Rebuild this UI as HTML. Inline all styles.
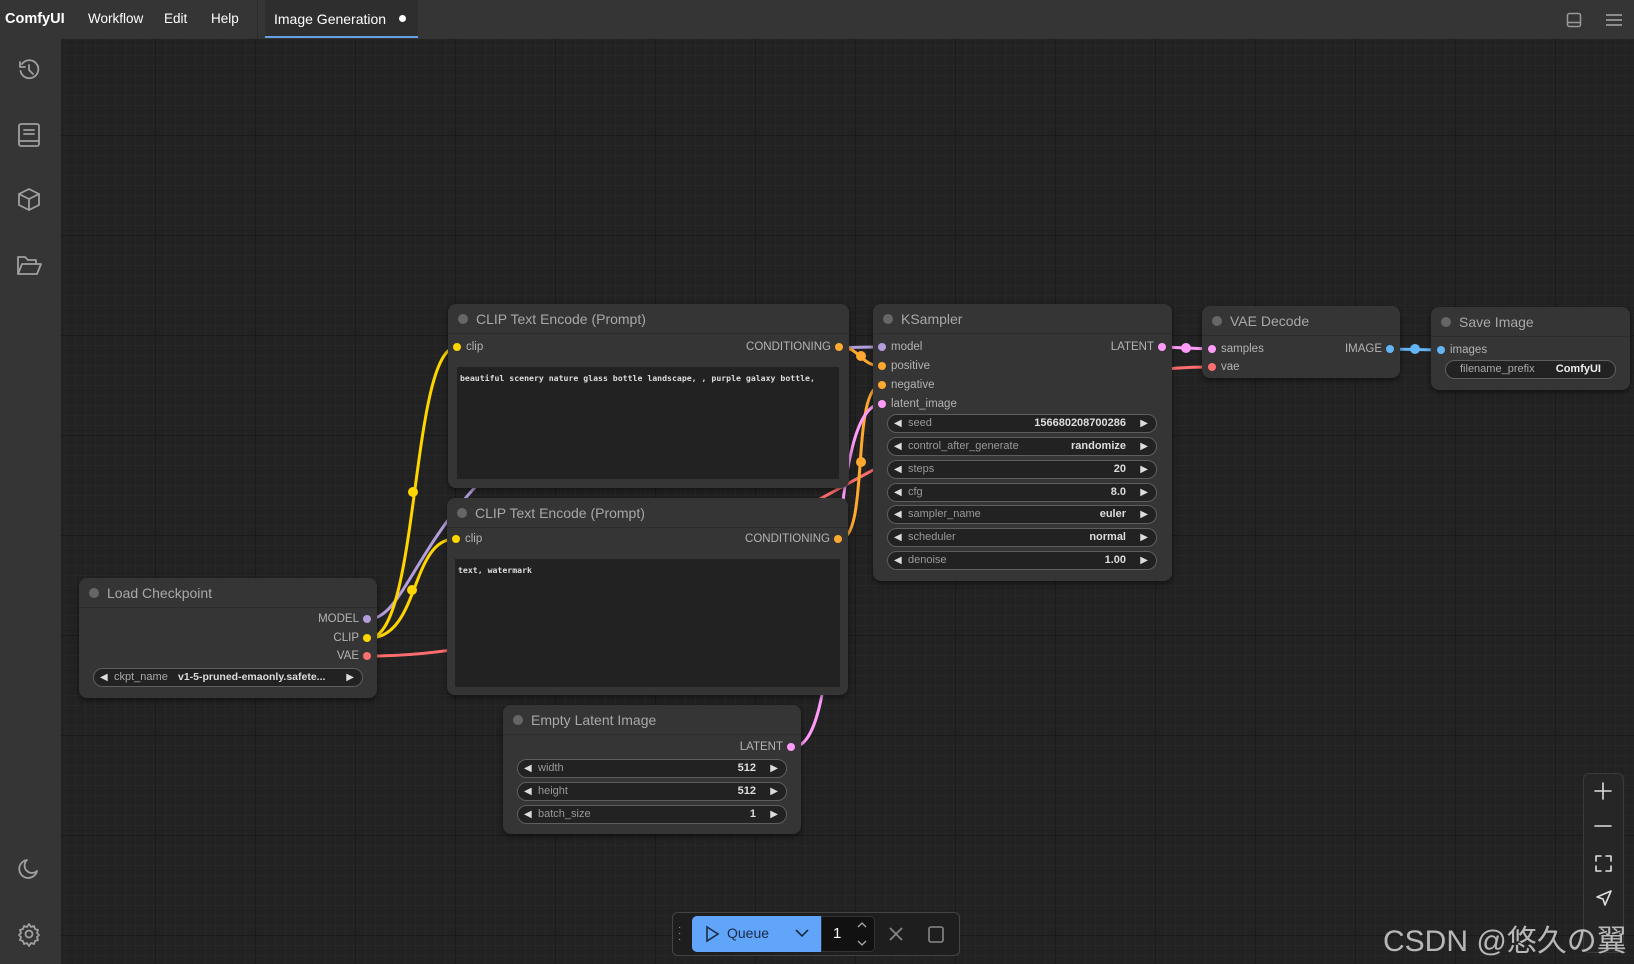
<!DOCTYPE html>
<html><head><meta charset="utf-8"><style>
*{box-sizing:border-box;margin:0;padding:0}
body{width:1634px;height:964px;overflow:hidden;background:#222;font-family:"Liberation Sans",Arial,sans-serif;position:relative}
#canvas{position:absolute;left:61px;top:39px;right:0;bottom:0;background-color:#222;
background-image:linear-gradient(#1a1a1a 1px,transparent 1px),linear-gradient(90deg,#1a1a1a 1px,transparent 1px),linear-gradient(#272727 1px,transparent 1px),linear-gradient(90deg,#272727 1px,transparent 1px);
background-size:100px 100px,100px 100px,10px 10px,10px 10px;background-position:-6px -4px}
#top{position:absolute;left:0;top:0;width:1634px;height:39px;background:#353535}
#top span{position:absolute;top:11px;color:#fff;font-size:13.5px}
#side{position:absolute;left:0;top:39px;width:61px;bottom:0;background:#353535}
.node{position:absolute;background:#353535;border-radius:8px;box-shadow:0 2px 6px rgba(0,0,0,.5)}
.title{height:30px;border-bottom:1px solid #2c2c2c;color:#a8a8a8;font-size:14px;line-height:30px;padding-left:28px;position:relative}
.title:before{content:"";position:absolute;left:10px;top:10px;width:10px;height:10px;border-radius:50%;background:#666}
.slot{position:absolute;font-size:11.5px;color:#b3b3b3}
.dot{position:absolute;width:8px;height:8px;border-radius:50%}
.w{position:absolute;height:19px;background:#222;border:1px solid #5e5e5e;border-radius:10px;font-size:11px;color:#999;line-height:17px}
.w .l{position:absolute;left:20px}
.w .v{position:absolute;right:30px;color:#ddd;font-weight:bold}
.w:before{content:"◀";position:absolute;left:6px;color:#ddd;font-size:10px}
.w:after{content:"▶";position:absolute;right:8px;color:#ddd;font-size:10px}
.w.t:before,.w.t:after{content:none}
.ta{position:absolute;background:#222;color:#ddd;font-family:"DejaVu Sans Mono",monospace;font-size:8.2px;font-weight:bold;padding:6px 3px;white-space:nowrap;overflow:hidden}
</style></head><body>
<div id="canvas"></div>
<svg width="1634" height="964" style="position:absolute;left:0;top:0" fill="none" stroke-width="3">
<path d="M369 619 C430 619 430 347 882 347" stroke="#b39ddb"/>
<path d="M369 638 C420 638 410 347 457 347" stroke="#ffd500"/>
<path d="M369 638 C420 638 410 539 455 539" stroke="#ffd500"/>
<path d="M369 656 C700 656 900 367 1210 367" stroke="#ff6e6e"/>
<path d="M840 347 C860 347 860 366 882 366" stroke="#ffa931"/>
<path d="M840 539 C870 539 850 385 882 385" stroke="#ffa931"/>
<path d="M793 747 C850 747 820 404 882 404" stroke="#ff9cf9"/>
<path d="M1163 347 L1210 349" stroke="#ff9cf9"/>
<path d="M1391 349 L1440 350" stroke="#64b5f6"/>
<g stroke="none">
<circle cx="413" cy="492" r="5" fill="#ffd500"/><circle cx="412" cy="590" r="5" fill="#ffd500"/>
<circle cx="861" cy="356" r="5" fill="#ffa931"/><circle cx="861" cy="462" r="5" fill="#ffa931"/>
<circle cx="1186" cy="348" r="5" fill="#ff9cf9"/><circle cx="1415" cy="349" r="5" fill="#64b5f6"/>
</g></svg>

<div id="top">
<span style="left:5px;font-weight:bold;font-size:14.5px">ComfyUI</span>
<span style="left:88px">Workflow</span><span style="left:164px">Edit</span><span style="left:211px">Help</span>
<div style="position:absolute;left:257px;top:0;width:1px;height:39px;background:#2a2a2a"></div>
<div style="position:absolute;left:265px;top:0;width:153px;height:38px;background:#2e2e2e;border-bottom:2px solid #64a0e8"></div>
<span style="left:274px;font-size:14px">Image Generation</span>
<div style="position:absolute;left:399px;top:15px;width:7px;height:7px;border-radius:50%;background:#fff"></div>
<svg style="position:absolute;left:1566px;top:12px" width="16" height="16" fill="none" stroke="#999" stroke-width="1.5"><rect x="1.5" y="1.5" width="13" height="13" rx="2"/><path d="M1.5 10.5h13"/></svg>
<svg style="position:absolute;left:1605px;top:12px" width="18" height="16" stroke="#999" stroke-width="1.8"><path d="M1 3h16M1 8h16M1 13h16"/></svg>
</div>

<div id="side">
<svg width="61" height="920" fill="none" stroke="#a0a0a0" stroke-width="1.8" stroke-linecap="round" stroke-linejoin="round">
<g transform="translate(17,19)"><path d="M3 4v5h5"/><path d="M3.5 13A9 9 0 1 0 5 6"/><path d="M12 7v5l4 4"/></g>
<g transform="translate(18,84)"><rect x="1" y="1" width="20" height="22" rx="2"/><path d="M1 18h20M6 7h10M6 11h10"/></g>
<g transform="translate(17,148)"><path d="M12 2l10 5v11l-10 5-10-5V7z"/><path d="M2 7l10 5 10-5M12 12v11"/></g>
<g transform="translate(17,215)"><path d="M1 20V3h7l3 3h8v4"/><path d="M1 20l4-10h19l-4 10z"/></g>
<g transform="translate(17,818)"><path d="M20 14A9 9 0 1 1 10 3a7 7 0 0 0 10 11z"/></g>
<g transform="translate(17,883)"><circle cx="12" cy="12" r="3.5"/><path d="M12 2l2 3 3-1 1 3 3 1-1 3 2 2-2 2 1 3-3 1-1 3-3-1-2 3-2-3-3 1-1-3-3-1 1-3-2-2 2-2-1-3 3-1 1-3 3 1z"/></g>
</svg></div>

<!-- CLIP 1 -->
<div class="node" style="left:448px;top:304px;width:401px;height:184px">
<div class="title">CLIP Text Encode (Prompt)</div>
<div class="dot" style="left:5px;top:39px;background:#ffd500"></div><div class="slot" style="left:18px;top:37px">clip</div>
<div class="slot" style="right:18px;top:37px">CONDITIONING</div><div class="dot" style="right:6px;top:39px;background:#ffa931"></div>
<div class="ta" style="left:9px;top:63px;width:382px;height:112px">beautiful scenery nature glass bottle landscape, , purple galaxy bottle,</div>
</div>
<!-- CLIP 2 -->
<div class="node" style="left:447px;top:498px;width:401px;height:197px">
<div class="title">CLIP Text Encode (Prompt)</div>
<div class="dot" style="left:5px;top:37px;background:#ffd500"></div><div class="slot" style="left:18px;top:35px">clip</div>
<div class="slot" style="right:18px;top:35px">CONDITIONING</div><div class="dot" style="right:6px;top:37px;background:#ffa931"></div>
<div class="ta" style="left:8px;top:61px;width:385px;height:128px">text, watermark</div>
</div>
<!-- Load Checkpoint -->
<div class="node" style="left:79px;top:578px;width:298px;height:120px">
<div class="title">Load Checkpoint</div>
<div class="slot" style="right:18px;top:35px">MODEL</div><div class="dot" style="right:6px;top:37px;background:#b39ddb"></div>
<div class="slot" style="right:18px;top:54px">CLIP</div><div class="dot" style="right:6px;top:56px;background:#ffd500"></div>
<div class="slot" style="right:18px;top:72px">VAE</div><div class="dot" style="right:6px;top:74px;background:#ff6e6e"></div>
<div class="w" style="left:14px;top:90px;width:270px"><span class="l" style="color:#aaa">ckpt_name</span><span class="v" style="left:84px;right:auto;font-size:10.5px">v1-5-pruned-emaonly.safete...</span></div>
</div>
<!-- Empty Latent -->
<div class="node" style="left:503px;top:705px;width:298px;height:129px">
<div class="title">Empty Latent Image</div>
<div class="slot" style="right:18px;top:36px">LATENT</div><div class="dot" style="right:6px;top:38px;background:#ff9cf9"></div>
<div class="w" style="left:14px;top:54px;width:270px"><span class="l">width</span><span class="v">512</span></div>
<div class="w" style="left:14px;top:77px;width:270px"><span class="l">height</span><span class="v">512</span></div>
<div class="w" style="left:14px;top:100px;width:270px"><span class="l">batch_size</span><span class="v">1</span></div>
</div>
<!-- KSampler -->
<div class="node" style="left:873px;top:304px;width:299px;height:277px">
<div class="title">KSampler</div>
<div class="dot" style="left:5px;top:39px;background:#b39ddb"></div><div class="slot" style="left:18px;top:37px">model</div>
<div class="dot" style="left:5px;top:58px;background:#ffa931"></div><div class="slot" style="left:18px;top:56px">positive</div>
<div class="dot" style="left:5px;top:77px;background:#ffa931"></div><div class="slot" style="left:18px;top:75px">negative</div>
<div class="dot" style="left:5px;top:96px;background:#ff9cf9"></div><div class="slot" style="left:18px;top:94px">latent_image</div>
<div class="slot" style="right:18px;top:37px">LATENT</div><div class="dot" style="right:6px;top:39px;background:#ff9cf9"></div>
<div class="w" style="left:14px;top:110px;width:270px"><span class="l">seed</span><span class="v">156680208700286</span></div>
<div class="w" style="left:14px;top:133px;width:270px"><span class="l">control_after_generate</span><span class="v">randomize</span></div>
<div class="w" style="left:14px;top:156px;width:270px"><span class="l">steps</span><span class="v">20</span></div>
<div class="w" style="left:14px;top:179px;width:270px"><span class="l">cfg</span><span class="v">8.0</span></div>
<div class="w" style="left:14px;top:201px;width:270px"><span class="l">sampler_name</span><span class="v">euler</span></div>
<div class="w" style="left:14px;top:224px;width:270px"><span class="l">scheduler</span><span class="v">normal</span></div>
<div class="w" style="left:14px;top:247px;width:270px"><span class="l">denoise</span><span class="v">1.00</span></div>
</div>
<!-- VAE Decode -->
<div class="node" style="left:1202px;top:306px;width:198px;height:72px">
<div class="title">VAE Decode</div>
<div class="dot" style="left:6px;top:39px;background:#ff9cf9"></div><div class="slot" style="left:19px;top:37px">samples</div>
<div class="dot" style="left:6px;top:57px;background:#ff6e6e"></div><div class="slot" style="left:19px;top:55px">vae</div>
<div class="slot" style="right:18px;top:37px">IMAGE</div><div class="dot" style="right:6px;top:39px;background:#64b5f6"></div>
</div>
<!-- Save Image -->
<div class="node" style="left:1431px;top:307px;width:199px;height:83px">
<div class="title">Save Image</div>
<div class="dot" style="left:6px;top:39px;background:#64b5f6"></div><div class="slot" style="left:19px;top:37px">images</div>
<div class="w t" style="left:14px;top:53px;width:171px;line-height:17px"><span style="position:absolute;left:14px;color:#aaa">filename_prefix</span><span style="position:absolute;right:14px;color:#eee;font-weight:bold">ComfyUI</span></div>
</div>

<!-- zoom controls -->
<div style="position:absolute;left:1583px;top:773px;width:41px;height:180px;background:#262626;border:1px solid #3a3a3a;border-radius:6px"></div>
<svg style="position:absolute;left:1583px;top:773px" width="41" height="180" fill="none" stroke="#ddd" stroke-width="1.6" stroke-linecap="round" stroke-linejoin="round">
<path d="M20 10v16M12 18h16M12 53h16"/>
<path d="M13 88v-5h5M23 83h5v5M28 93v5h-5M18 98h-5v-5"/>
<path d="M28 118l-14 6 6 2 2 6z"/>
</svg>
<!-- queue -->
<div style="position:absolute;left:672px;top:912px;width:288px;height:44px;background:#1e1e1e;border:1px solid #444;border-radius:6px"></div>
<div style="position:absolute;left:678px;top:925px;color:#c8a060;font-size:10px;line-height:6px">·<br>·<br>·</div>
<div style="position:absolute;left:692px;top:916px;width:129px;height:36px;background:#60a5fa;border-radius:5px 0 0 5px"></div>
<svg style="position:absolute;left:705px;top:925px" width="110" height="18" fill="none" stroke="#1c2b44" stroke-width="1.6"><path d="M2 2l11 7-11 7z"/><path d="M91 5l6 6 6-6"/></svg>
<span style="position:absolute;left:727px;top:925px;font-size:14px;color:#1c2b44">Queue</span>
<div style="position:absolute;left:821px;top:916px;width:54px;height:36px;background:#111;border:1px solid #333;border-radius:0 5px 5px 0"></div>
<span style="position:absolute;left:833px;top:925px;font-size:15px;color:#fff">1</span>
<svg style="position:absolute;left:855px;top:919px" width="14" height="30" fill="none" stroke="#aaa" stroke-width="1.3"><path d="M3 8l4-4 4 4M3 22l4 4 4-4"/></svg>
<svg style="position:absolute;left:885px;top:923px" width="70" height="22" fill="none" stroke="#888" stroke-width="1.6"><path d="M5 5l12 12M17 5L5 17"/><rect x="44" y="4" width="14" height="15" rx="2"/></svg>
<div style="position:absolute;left:1383px;top:916px;font-size:30px;color:#c8c8c8;font-family:'Liberation Sans','Noto Sans CJK JP',sans-serif;opacity:.9;white-space:nowrap">CSDN @悠久の翼</div>
</body></html>
